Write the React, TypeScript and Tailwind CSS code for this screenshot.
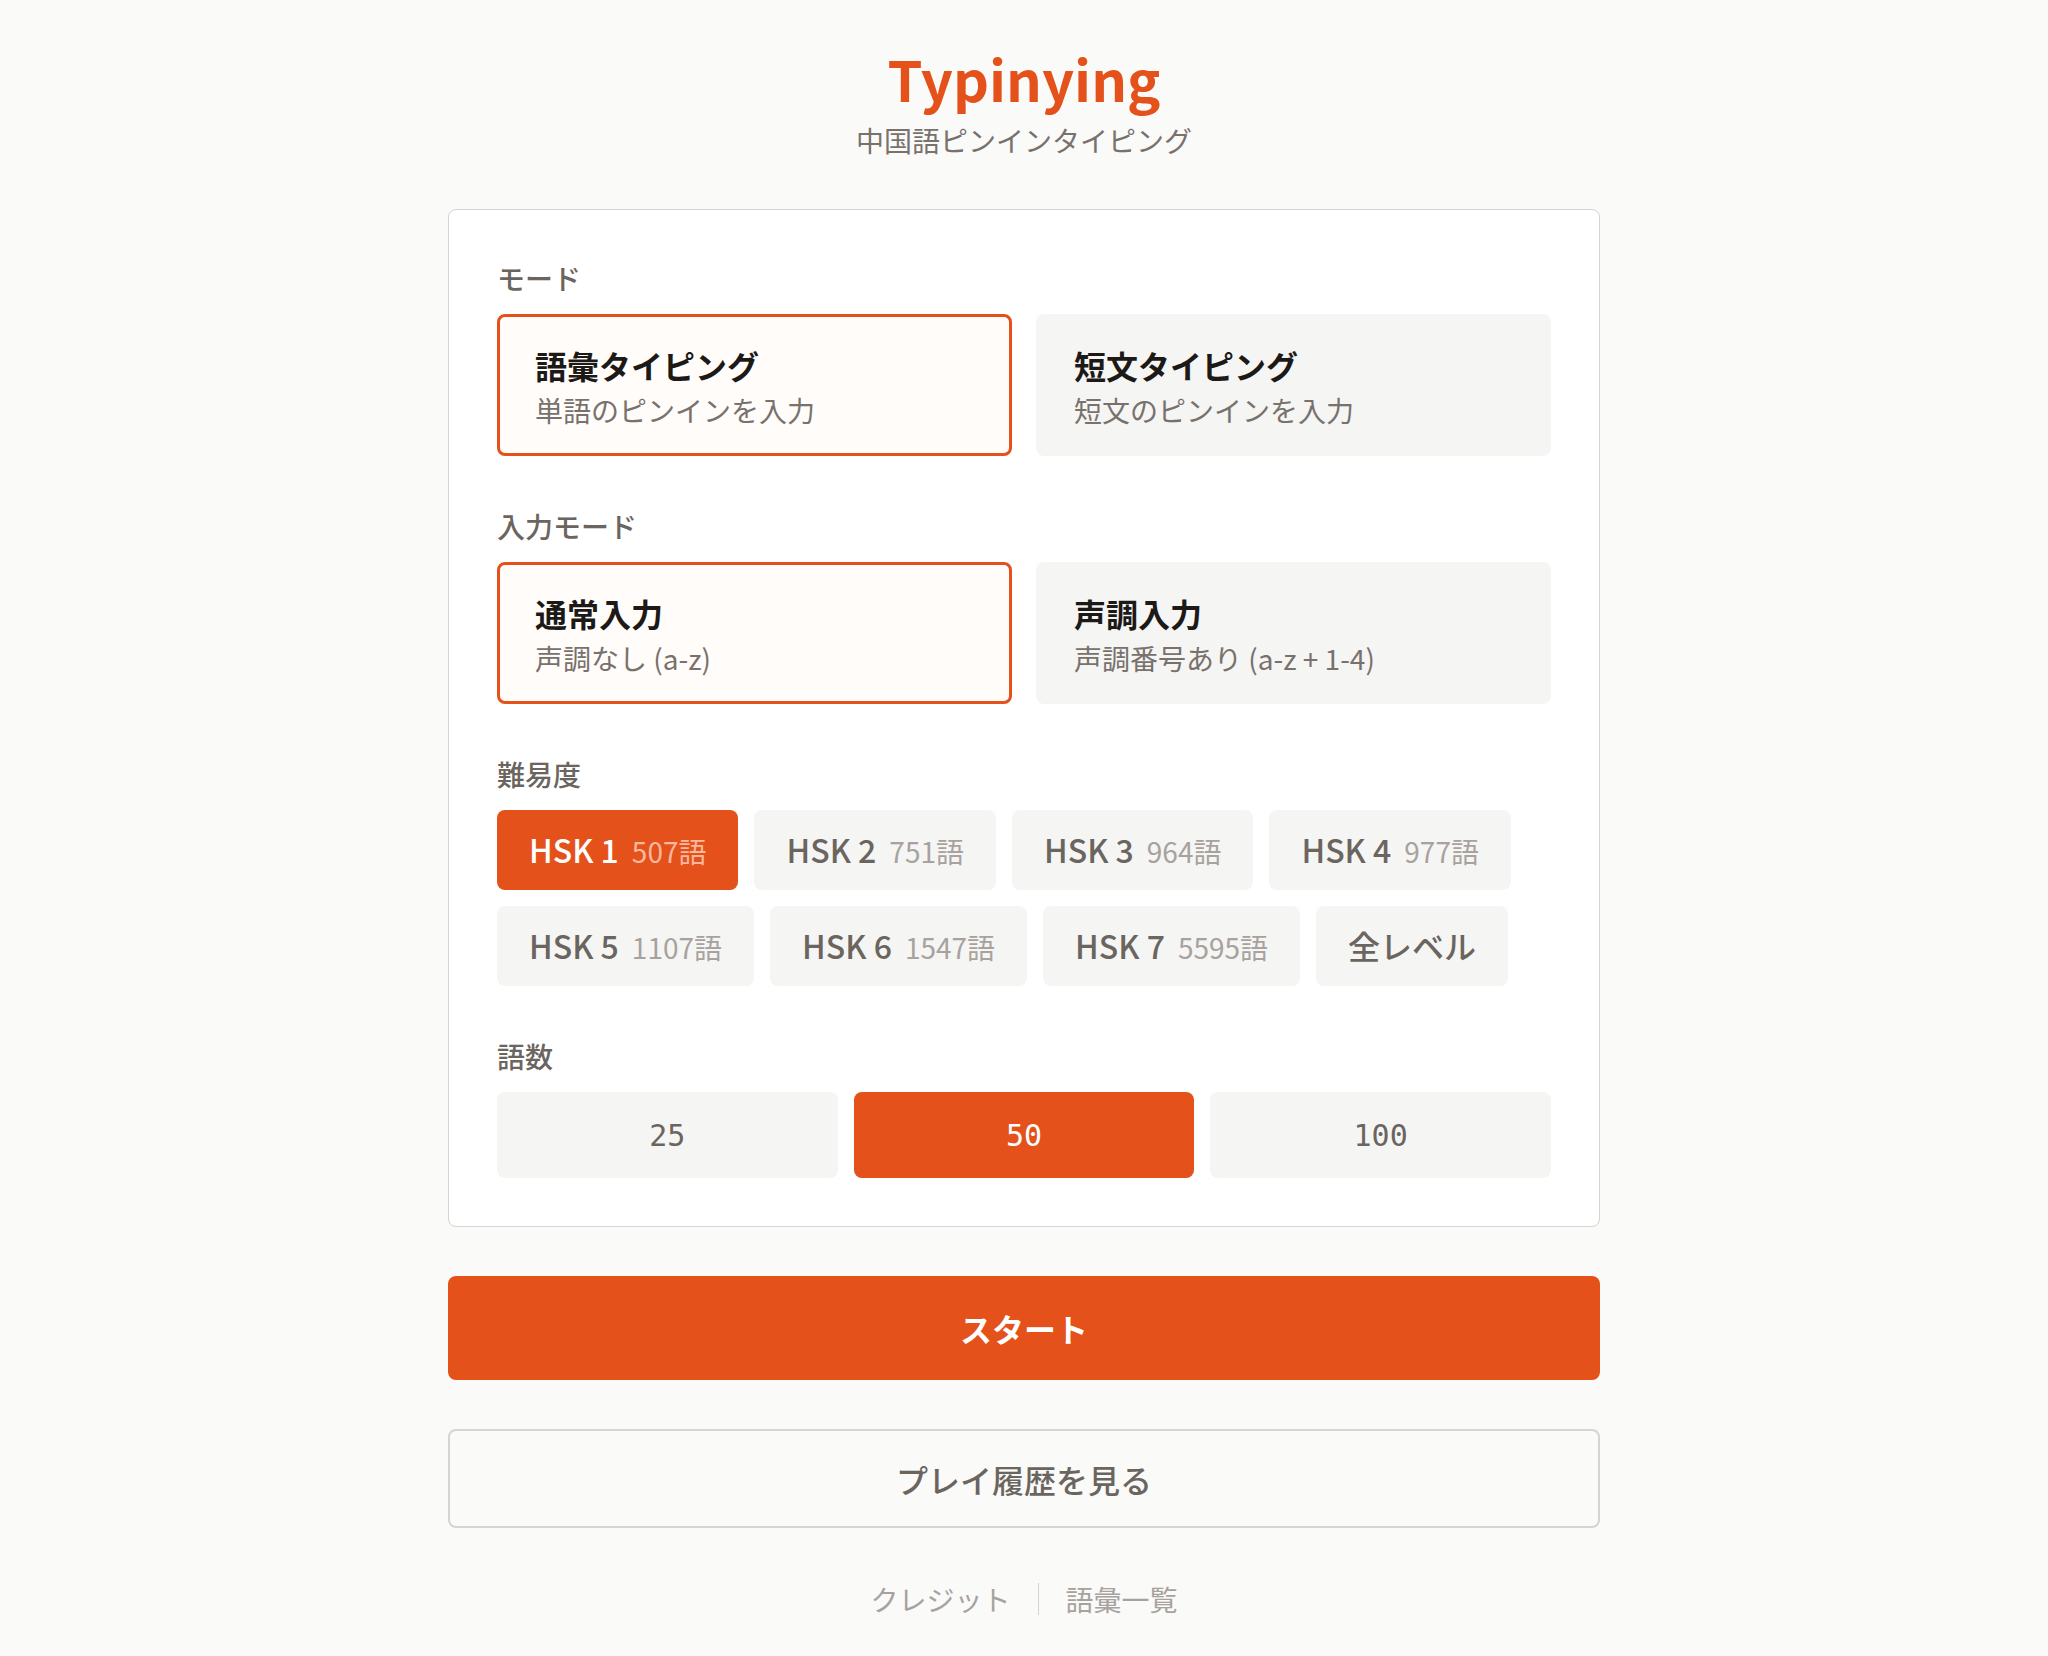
import React from "react";

const ORANGE = "bg-[#e4511b]";

function Label({ children }: { children: React.ReactNode }) {
  return (
    <div className="text-[28px] leading-[40px] font-medium text-[#6b6560] mb-4">
      {children}
    </div>
  );
}

function OptionCard({
  title,
  sub,
  active,
}: {
  title: string;
  sub: string;
  active?: boolean;
}) {
  return (
    <div
      className={
        "h-[142px] rounded-lg border-[3px] px-[35px] pt-[27px] " +
        (active
          ? "border-[#e4511b] bg-[#fffcfa]"
          : "border-transparent bg-[#f5f5f4]")
      }
    >
      <div className="text-[32px] leading-[42px] font-bold text-[#1c1917]">
        {title}
      </div>
      <div className="text-[28px] leading-[40px] mt-[4px] text-[#78716c]">
        {sub}
      </div>
    </div>
  );
}

function HskButton({
  name,
  count,
  active,
}: {
  name: string;
  count?: string;
  active?: boolean;
}) {
  return (
    <div
      className={
        "h-[80px] px-8 rounded-lg flex items-baseline justify-center pt-[19px] " +
        (active ? ORANGE : "bg-[#f5f5f4]")
      }
    >
      <span
        className={
          "text-[32px] leading-[40px] font-medium " +
          (active ? "text-white" : "text-[#6b6560]")
        }
      >
        {name}
      </span>
      {count && (
        <span
          className={
            "ml-[13px] text-[28px] leading-[40px] " +
            (active ? "text-[#fbb89c]" : "text-[#a8a29e]")
          }
        >
          {count}
        </span>
      )}
    </div>
  );
}

function CountButton({ n, active }: { n: string; active?: boolean }) {
  return (
    <div
      className={
        "h-[86px] rounded-lg flex items-center justify-center text-[30px] font-['DejaVu_Sans_Mono',monospace] " +
        (active ? ORANGE + " text-white" : "bg-[#f5f5f4] text-[#6b6560]")
      }
    >
      {n}
    </div>
  );
}

export default function App() {
  return (
    <div className="min-h-screen bg-[#fafaf9] font-['Noto_Sans_CJK_JP','Noto_Sans_CJK_SC',sans-serif]">
      <div className="w-[1152px] mx-auto pt-[46px] pb-[40px]">
        <div className="flex flex-col items-center">
          <h1 className="text-[56px] leading-[64px] font-bold text-[#e4511b]">
            Typinying
          </h1>
          <div className="mt-[12px] text-[28px] leading-[36px] text-[#78716c]">
            中国語ピンインタイピング
          </div>
        </div>

        <div className="mt-[51px] bg-white border border-[#d6d3d1] rounded-lg p-12">
          <section>
            <Label>モード</Label>
            <div className="grid grid-cols-2 gap-6">
              <OptionCard title="語彙タイピング" sub="単語のピンインを入力" active />
              <OptionCard title="短文タイピング" sub="短文のピンインを入力" />
            </div>
          </section>

          <section className="mt-[50px]">
            <Label>入力モード</Label>
            <div className="grid grid-cols-2 gap-6">
              <OptionCard title="通常入力" sub="声調なし (a-z)" active />
              <OptionCard title="声調入力" sub="声調番号あり (a-z + 1-4)" />
            </div>
          </section>

          <section className="mt-[50px]">
            <Label>難易度</Label>
            <div className="flex flex-wrap gap-4">
              <HskButton name="HSK 1" count="507語" active />
              <HskButton name="HSK 2" count="751語" />
              <HskButton name="HSK 3" count="964語" />
              <HskButton name="HSK 4" count="977語" />
              <HskButton name="HSK 5" count="1107語" />
              <HskButton name="HSK 6" count="1547語" />
              <HskButton name="HSK 7" count="5595語" />
              <HskButton name="全レベル" />
            </div>
          </section>

          <section className="mt-[50px]">
            <Label>語数</Label>
            <div className="grid grid-cols-3 gap-4">
              <CountButton n="25" />
              <CountButton n="50" active />
              <CountButton n="100" />
            </div>
          </section>
        </div>

        <button
          className={
            "mt-[49px] w-full h-[104px] rounded-lg text-white text-[32px] font-bold " +
            ORANGE
          }
        >
          スタート
        </button>

        <button className="mt-[49px] w-full h-[99px] rounded-lg border-2 border-[#d6d3d1] bg-[#fafaf9] text-[32px] font-medium text-[#6b6560]">
          プレイ履歴を見る
        </button>

        <div className="mt-[51px] flex items-center justify-center text-[28px] leading-[40px] text-[#a8a29e]">
          <span>クレジット</span>
          <span className="mx-[27px] w-px h-[32px] bg-[#d6d3d1]" />
          <span>語彙一覧</span>
        </div>
      </div>
    </div>
  );
}
